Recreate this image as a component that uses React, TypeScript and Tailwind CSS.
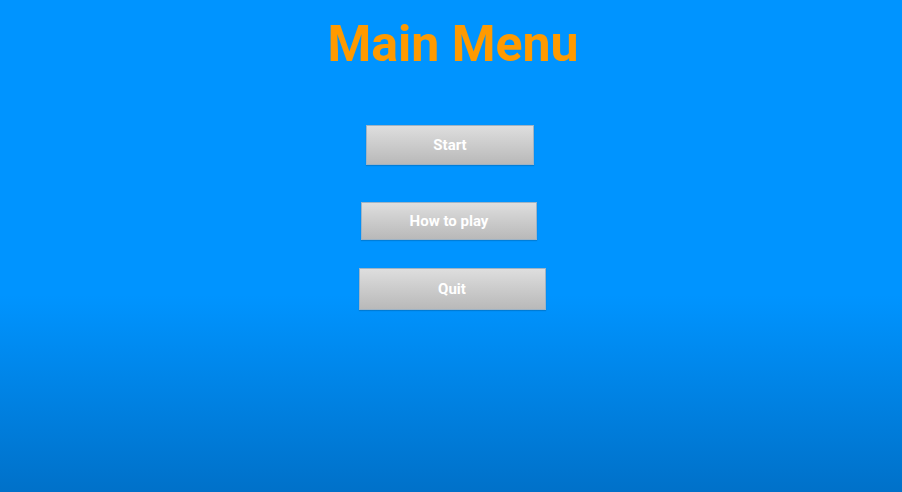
import React from "react";

function MenuButton({ label, className }: { label: string; className: string }) {
  return (
    <button
      className={`flex items-center justify-center border border-[#9fb3c4] bg-gradient-to-b from-[#dedede] to-[#b9b9b9] text-[15px] font-bold text-white shadow-[0_1px_1px_rgba(0,0,0,0.15)] ${className}`}
      style={{ fontFamily: "Roboto, 'Liberation Sans', sans-serif" }}
    >
      {label}
    </button>
  );
}

export default function App() {
  return (
    <div className="flex h-[492px] w-[902px] flex-col items-center bg-[linear-gradient(to_bottom,#0094ff_0%,#0094ff_60%,#0071c9_100%)]">
      <h1
        className="mt-[14px] ml-[4px] text-[50px] font-bold leading-[60px] text-[#ff9a00]"
        style={{ fontFamily: "Roboto, 'Liberation Sans', sans-serif" }}
      >
        Main Menu
      </h1>

      <div className="mt-[51px] flex flex-col items-center">
        <MenuButton label="Start" className="ml-[-2px] h-[40px] w-[168px]" />
        <MenuButton label="How to play" className="mt-[37px] ml-[-4px] h-[38px] w-[176px]" />
        <MenuButton label="Quit" className="mt-[28px] ml-[2px] h-[42px] w-[187px]" />
      </div>
    </div>
  );
}
